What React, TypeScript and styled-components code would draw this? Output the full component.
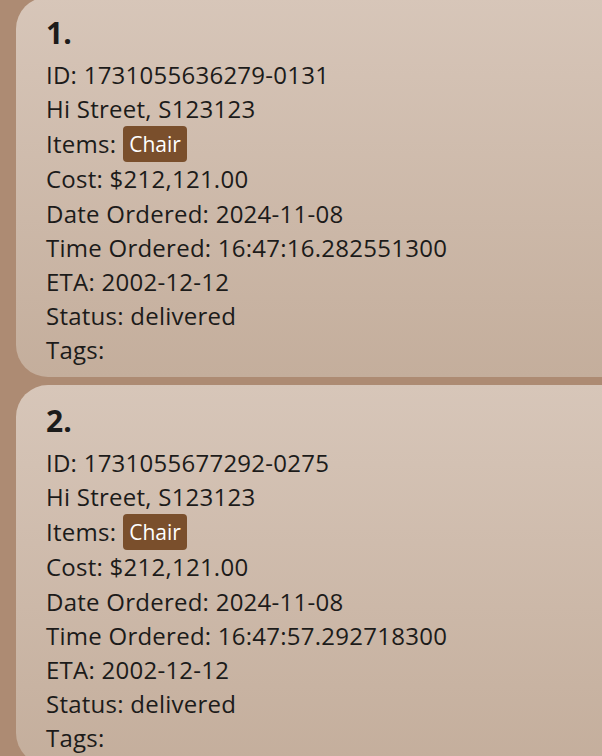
import styled, { createGlobalStyle } from 'styled-components';

const GlobalStyle = createGlobalStyle`
  html, body {
    margin: 0;
    padding: 0;
    background: #ad8b73;
    overflow: hidden;
  }
`;

const Page = styled.main`
  width: 602px;
  height: 756px;
  overflow: hidden;
  background: #ad8b73;
  padding-left: 16px;
  box-sizing: border-box;
  font-family: 'Open Sans', 'Noto Sans', sans-serif;
  color: #1c1b1a;
`;

const List = styled.div`
  display: flex;
  flex-direction: column;
  gap: 8px;
  margin-top: -3px;
  width: 620px;
`;

const Card = styled.section`
  height: 380px;
  box-sizing: border-box;
  padding: 16px 30px 0;
  border-radius: 32px 0 0 32px;
  background: linear-gradient(to bottom, #d7c6b9, #c4ae9c);
  display: flex;
  flex-direction: column;
`;

const Title = styled.h2`
  margin: 0 0 5px;
  font-size: 30px;
  font-weight: 700;
  line-height: 40px;
`;

const Row = styled.div`
  font-size: 24px;
  letter-spacing: 0.25px;
  line-height: 34.2px;
  display: flex;
  align-items: center;
  white-space: nowrap;
`;

const Tag = styled.span`
  margin-left: 7px;
  background: #7a4f2c;
  color: #ffffff;
  border-radius: 4px;
  padding: 0 6px;
  height: 36px;
  line-height: 36px;
  font-size: 21px;
  letter-spacing: 0;
`;

type Order = {
  id: string;
  address: string;
  items: string[];
  cost: string;
  date: string;
  time: string;
  eta: string;
  status: string;
};

const orders: Order[] = [
  {
    id: '1731055636279-0131',
    address: 'Hi Street, S123123',
    items: ['Chair'],
    cost: '$212,121.00',
    date: '2024-11-08',
    time: '16:47:16.282551300',
    eta: '2002-12-12',
    status: 'delivered',
  },
  {
    id: '1731055677292-0275',
    address: 'Hi Street, S123123',
    items: ['Chair'],
    cost: '$212,121.00',
    date: '2024-11-08',
    time: '16:47:57.292718300',
    eta: '2002-12-12',
    status: 'delivered',
  },
];

export default function App() {
  return (
    <Page>
      <GlobalStyle />
      <List>
        {orders.map((o, idx) => (
          <Card key={o.id}>
            <Title>{idx + 1}.</Title>
            <Row>ID: {o.id}</Row>
            <Row>{o.address}</Row>
            <Row>
              Items:
              {o.items.map(item => (
                <Tag key={item}>{item}</Tag>
              ))}
            </Row>
            <Row>Cost: {o.cost}</Row>
            <Row>Date Ordered: {o.date}</Row>
            <Row>Time Ordered: {o.time}</Row>
            <Row>ETA: {o.eta}</Row>
            <Row>Status: {o.status}</Row>
            <Row>Tags:</Row>
          </Card>
        ))}
      </List>
    </Page>
  );
}
